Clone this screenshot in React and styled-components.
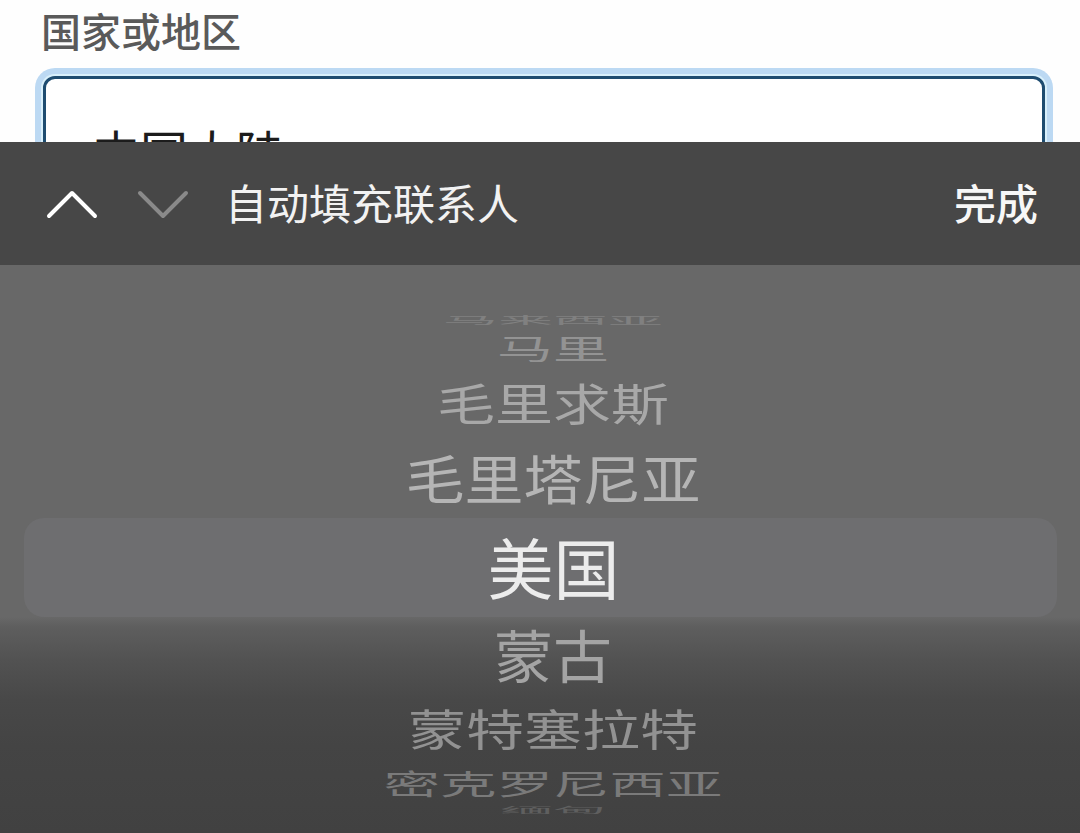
import React from "react";
import styled, { createGlobalStyle } from "styled-components";

const Global = createGlobalStyle`
  html, body { margin: 0; padding: 0; background: #fefefe; }
  body { width: 1080px; height: 833px; overflow: hidden; font-family: "Noto Sans CJK SC", "Noto Sans", sans-serif; }
  * { box-sizing: border-box; }
`;

const Screen = styled.div`
  width: 1080px;
  height: 833px;
  display: flex;
  flex-direction: column;
  overflow: hidden;
`;

const FormArea = styled.section`
  height: 142px;
  flex: none;
  overflow: hidden;
  background: #fefefe;
  padding: 6px 35px 0 41px;
`;

const Label = styled.div`
  font-size: 40px;
  line-height: 48px;
  font-weight: 500;
  color: #5a5a5a;
`;

const Field = styled.div`
  margin-top: 22px;
  margin-left: 2px;
  height: 140px;
  border: 3px solid #1e4c70;
  border-radius: 12px;
  box-shadow: 0 0 0 2px #d9f0fb, 0 0 0 8px #bcd9f3;
  background: #fff;
  padding: 47px 0 0 46px;
  font-size: 48px;
  line-height: 1;
  color: #1c1c1c;
`;

const Toolbar = styled.div`
  height: 123px;
  flex: none;
  background: #474747;
  display: flex;
  align-items: center;
  padding: 0 42px 0 46px;
`;

const NavButton = styled.span`
  display: flex;
  align-items: center;
  margin-right: ${(p) => p.$gap}px;
`;

const ToolbarTitle = styled.span`
  font-size: 42px;
  line-height: 1;
  color: #f2f2f2;
  flex: 1;
  margin-top: -4px;
`;

const Done = styled.span`
  font-size: 42px;
  line-height: 1;
  font-weight: 500;
  color: #f7f7f7;
  margin-top: -4px;
`;

const Wheel = styled.div`
  flex: 1;
  display: flex;
  flex-direction: column;
  padding-top: 45px;
  background: linear-gradient(
    to bottom,
    #686868 0px,
    #686868 352px,
    #5e5e5e 362px,
    #525252 395px,
    #484848 435px,
    #444444 480px,
    #414141 568px
  );
  overflow: hidden;
`;

const Slot = styled.div`
  height: ${(p) => p.$h}px;
  flex: none;
  display: flex;
  align-items: center;
  justify-content: center;
  padding-left: 26px;
`;

const SelectedSlot = styled(Slot)`
  margin: 0 23px 0 24px;
  border-radius: 20px;
  background: #6e6e70;
`;

const ItemText = styled.span`
  display: block;
  font-size: ${(p) => p.$size}px;
  line-height: 1;
  color: ${(p) => p.$color};
  white-space: nowrap;
  transform: translateY(${(p) => p.$dy || 0}px) scaleY(${(p) => p.$scale});
`;

const Chevron = ({ dir, color }) => (
  <svg width="52" height="32" viewBox="0 0 52 32">
    <polyline
      points={dir === "up" ? "3,28 26,5 49,28" : "3,5 26,28 49,5"}
      fill="none"
      stroke={color}
      strokeWidth="4"
      strokeLinecap="round"
      strokeLinejoin="round"
    />
  </svg>
);

const above = [
  { t: "马来西亚", h: 24, size: 55, scale: 0.19, color: "#808080" },
  { t: "马里", h: 34, size: 56, scale: 0.5, color: "#939393" },
  { t: "毛里求斯", h: 74, size: 58, scale: 0.76, color: "#a8a8a8" },
  { t: "毛里塔尼亚", h: 76, size: 59, scale: 0.9, color: "#b5b5b5" },
];

const below = [
  { t: "蒙古", h: 78, size: 59, scale: 0.97, color: "#a4a4a4" },
  { t: "蒙特塞拉特", h: 72, size: 58, scale: 0.74, color: "#929292" },
  { t: "密克罗尼西亚", h: 36, size: 56.5, scale: 0.5, color: "#7a7a7a" },
  { t: "缅甸", h: 18, size: 53, scale: 0.15, color: "#5f5f5f" },
];

export default function App() {
  return (
    <>
      <Global />
      <Screen>
        <FormArea>
          <Label>国家或地区</Label>
          <Field>中国大陆</Field>
        </FormArea>
        <Toolbar>
          <NavButton $gap={39}>
            <Chevron dir="up" color="#ffffff" />
          </NavButton>
          <NavButton $gap={36}>
            <Chevron dir="down" color="#8a8a8a" />
          </NavButton>
          <ToolbarTitle>自动填充联系人</ToolbarTitle>
          <Done>完成</Done>
        </Toolbar>
        <Wheel>
          {above.map((it) => (
            <Slot key={it.t} $h={it.h}>
              <ItemText $size={it.size} $scale={it.scale} $color={it.color} $dy={-3}>
                {it.t}
              </ItemText>
            </Slot>
          ))}
          <SelectedSlot $h={99}>
            <ItemText $size={66} $scale={1} $color="#ececec" $dy={-3}>
              美国
            </ItemText>
          </SelectedSlot>
          {below.map((it) => (
            <Slot key={it.t} $h={it.h}>
              <ItemText $size={it.size} $scale={it.scale} $color={it.color} $dy={-3}>
                {it.t}
              </ItemText>
            </Slot>
          ))}
        </Wheel>
      </Screen>
    </>
  );
}
